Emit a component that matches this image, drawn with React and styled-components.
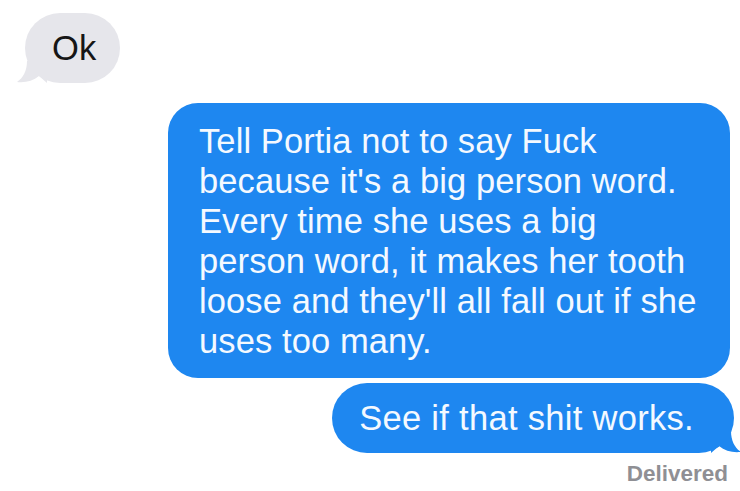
import styled, { createGlobalStyle } from "styled-components"

const GlobalStyle = createGlobalStyle`
    html, body {
        margin: 0;
        padding: 0;
        background: #ffffff;
    }
    body {
        font-family: "Liberation Sans", Arial, sans-serif;
    }
`

const Tela = styled.div`
    width: 740px;
    height: 491px;
    display: flex;
    flex-direction: column;
    overflow: hidden;
`

const Balao = styled.div`
    position: relative;
    box-sizing: border-box;
    font-size: 34.5px;
    line-height: 40px;
    letter-spacing: 0.1px;
    white-space: nowrap;
    background: ${({ $enviado }) => ($enviado ? "#1e87f0" : "#e6e6eb")};
    color: ${({ $enviado }) => ($enviado ? "#f4f9ff" : "#161616")};
    align-self: ${({ $enviado }) => ($enviado ? "flex-end" : "flex-start")};
`

const Recebido = styled(Balao)`
    margin: 13px 0 0 25px;
    height: 70px;
    padding: 15px 24px 0 27px;
    border-radius: 35px;
`

const Longo = styled(Balao)`
    margin: 20px 10px 0 0;
    width: 562px;
    padding: 18px 20px 17px 31px;
    border-radius: 30px;
`

const Curto = styled(Balao)`
    margin: 5px 6px 0 0;
    height: 70px;
    padding: 15px 40px 0 27px;
    border-radius: 35px;
    letter-spacing: 0.3px;
`

const Cauda = styled.svg`
    position: absolute;
    bottom: 0;
    ${({ $lado }) => ($lado === "esq" ? "left: -8px;" : "right: -7px;")}
`

const Status = styled.div`
    align-self: flex-end;
    margin: 8px 12px 0 0;
    font-size: 22.5px;
    font-weight: 700;
    line-height: 26px;
    color: #8f8f94;
`

export default function App() {
    return (
        <>
            <GlobalStyle />
            <Tela>
                <Recebido>
                    Ok
                    <Cauda $lado="esq" width="30" height="22" viewBox="0 0 30 22">
                        <path d="M10 0 C10 10 6 17 0 21 C8 22 16 20 22 15 L30 22 L30 0 Z" fill="#e6e6eb" />
                    </Cauda>
                </Recebido>
                <Longo $enviado>
                    Tell Portia not to say Fuck<br />
                    because it's a big person word.<br />
                    Every time she uses a big<br />
                    person word, it makes her tooth<br />
                    loose and they'll all fall out if she<br />
                    uses too many.
                </Longo>
                <Curto $enviado>
                    See if that shit works.
                    <Cauda $lado="dir" width="30" height="22" viewBox="0 0 30 22">
                        <path d="M20 0 C20 10 24 17 30 21 C22 22 14 20 8 15 L0 22 L0 0 Z" fill="#1e87f0" />
                    </Cauda>
                </Curto>
                <Status>Delivered</Status>
            </Tela>
        </>
    )
}
